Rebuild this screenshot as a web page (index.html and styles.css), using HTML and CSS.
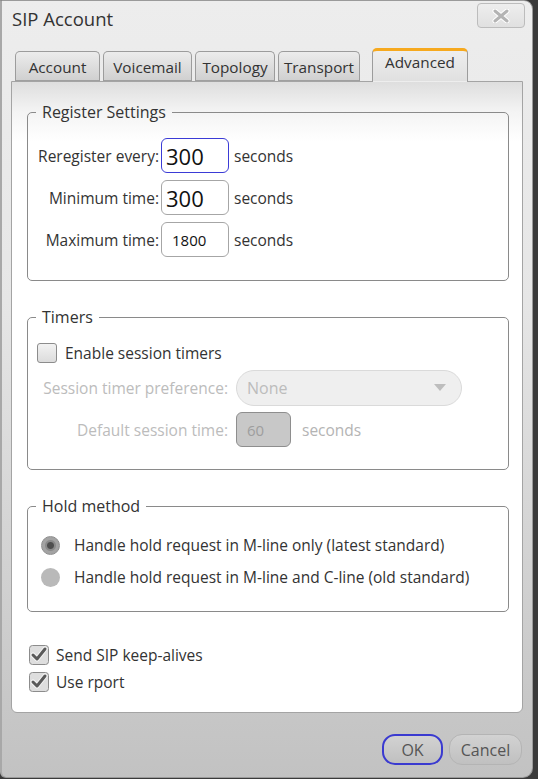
FILE: index.html
```html
<!DOCTYPE html>
<html>
<head>
<meta charset="utf-8">
<link rel="stylesheet" href="styles.css">
</head>
<body>
<div class="window">
  <div class="titlebar">
    <span class="title">SIP Account</span>
    <button class="close" type="button" aria-label="Close">
      <svg width="22" height="14" viewBox="0 0 22 14">
        <path d="M5 2 L17 12 M17 2 L5 12" stroke="#fff" stroke-width="5" stroke-linecap="round"/>
        <path d="M5 2 L17 12 M17 2 L5 12" stroke="#b4b4b4" stroke-width="3" stroke-linecap="round"/>
      </svg>
    </button>
  </div>
  <div class="tabs">
    <div class="tab t1">Account</div>
    <div class="tab t2">Voicemail</div>
    <div class="tab t3">Topology</div>
    <div class="tab t4">Transport</div>
    <div class="tab active">Advanced</div>
    <div class="tabfill"></div>
  </div>
  <div class="panel">
    <fieldset class="group reg">
      <legend>Register Settings</legend>
      <div class="row">
        <span class="lbl">Reregister every:</span>
        <span class="field focus big">300</span>
        <span class="unit">seconds</span>
      </div>
      <div class="row">
        <span class="lbl">Minimum time:</span>
        <span class="field big">300</span>
        <span class="unit">seconds</span>
      </div>
      <div class="row">
        <span class="lbl">Maximum time:</span>
        <span class="field small">1800</span>
        <span class="unit">seconds</span>
      </div>
    </fieldset>

    <fieldset class="group timers">
      <legend>Timers</legend>
      <div class="check-row first">
        <span class="cbox"></span>
        <span>Enable session timers</span>
      </div>
      <div class="row dis">
        <span class="lbl wide">Session timer preference:</span>
        <span class="select">None<svg class="caret" width="12" height="7" viewBox="0 0 12 7"><path d="M0 0 H12 L6 7 Z" fill="#bdbdbd"/></svg></span>
      </div>
      <div class="row dis">
        <span class="lbl wide">Default session time:</span>
        <span class="field disabled">60</span>
        <span class="unit u2">seconds</span>
      </div>
    </fieldset>

    <fieldset class="group hold">
      <legend>Hold method</legend>
      <div class="radio-row">
        <span class="radio on"></span>
        <span>Handle hold request in M-line only (latest standard)</span>
      </div>
      <div class="radio-row">
        <span class="radio"></span>
        <span>Handle hold request in M-line and C-line (old standard)</span>
      </div>
    </fieldset>

    <div class="checks">
      <div class="check-row">
        <svg class="cicon" width="20" height="20" viewBox="0 0 20 20">
          <rect x="0.5" y="0.5" width="19" height="19" rx="3" fill="#dedede" stroke="#8c8c8c"/>
          <path d="M4 10 L8 14 L16 4" fill="none" stroke="#f4f4f4" stroke-width="5" stroke-linejoin="round" stroke-linecap="round"/>
          <path d="M4 10 L8 14 L16 4" fill="none" stroke="#5a5a5a" stroke-width="3" stroke-linejoin="round" stroke-linecap="round"/>
        </svg>
        <span>Send SIP keep-alives</span>
      </div>
      <div class="check-row">
        <svg class="cicon" width="20" height="20" viewBox="0 0 20 20">
          <rect x="0.5" y="0.5" width="19" height="19" rx="3" fill="#dedede" stroke="#8c8c8c"/>
          <path d="M4 10 L8 14 L16 4" fill="none" stroke="#f4f4f4" stroke-width="5" stroke-linejoin="round" stroke-linecap="round"/>
          <path d="M4 10 L8 14 L16 4" fill="none" stroke="#5a5a5a" stroke-width="3" stroke-linejoin="round" stroke-linecap="round"/>
        </svg>
        <span>Use rport</span>
      </div>
    </div>
  </div>
  <div class="footer">
    <button class="btn ok" type="button">OK</button>
    <button class="btn" type="button">Cancel</button>
  </div>
</div>
</body>
</html>
```

FILE: styles.css
```css
html, body {
  margin: 0;
  padding: 0;
}
body {
  background: #3a3a3a;
  width: 538px;
  height: 779px;
  overflow: hidden;
  font-family: "Open Sans", "Noto Sans", sans-serif;
  font-size: 15.5px;
  color: #333;
}
.window {
  box-sizing: border-box;
  width: 533px;
  height: 778px;
  border: 1px solid #9a9a9a;
  border-left: 2px solid #a8a8a8;
  border-radius: 0 9px 10px 6px;
  background: linear-gradient(#ededed 0px, #e6e6e6 300px, #c6c6c6 720px, #c2c2c2 100%);
  display: flex;
  flex-direction: column;
}
.titlebar {
  height: 46px;
  display: flex;
  justify-content: space-between;
  align-items: flex-start;
}
.title {
  margin: 5px 0 0 10px;
  font-size: 18.5px;
  color: #333;
}
.close {
  margin: 2px 7px 0 0;
  width: 48px;
  height: 25px;
  box-sizing: border-box;
  border: 1px solid #bcbcbc;
  border-radius: 4px;
  background: linear-gradient(#eeeeee, #e0e0e0);
  padding: 0;
  display: flex;
  align-items: center;
  justify-content: center;
}
.tabs {
  display: flex;
  align-items: flex-end;
  height: 34px;
  margin-left: 12px;
  position: relative;
  z-index: 1;
}
.tab {
  box-sizing: border-box;
  height: 30px;
  border: 1px solid #9c9c9c;
  border-bottom: 1px solid #a0a0a0;
  border-radius: 5px 5px 0 0;
  background: linear-gradient(#ececec, #d0d0d0);
  display: flex;
  align-items: center;
  justify-content: center;
  font-size: 15.3px;
  color: #333;
  margin-right: 3px;
  padding-top: 1px;
}
.t1 { width: 85px; margin-left: 1px; }
.t2 { width: 89px; }
.t3 { width: 80px; }
.t4 { width: 82px; margin-right: 12px; }
.tab.active {
  width: 96px;
  height: 34px;
  border-top: 3px solid #f6a91f;
  border-bottom: 1px solid transparent;
  background: linear-gradient(#eeeeee, #e0e0e0);
  align-items: flex-start;
  padding-top: 1px;
  margin-right: 0;
  margin-bottom: -1px;
}
.tabfill {
  flex: 1;
}
.panel {
  box-sizing: border-box;
  margin: 0 9px 0 9px;
  height: 632px;
  border: 1px solid #a4a4a4;
  border-radius: 0 0 6px 6px;
  background: linear-gradient(#dedede 0px, #f4f4f4 30px, #ffffff 60px);
  padding: 20px 13px 0 15px;
}
.group {
  margin: 0;
  border: 1px solid #8a8a8a;
  border-radius: 5px;
  padding: 0;
}
.group legend {
  padding: 0 6px;
  margin-left: 8px;
  font-size: 16px;
  line-height: 20px;
}
.reg {
  height: 179px;
  box-sizing: border-box;
  padding-top: 16px;
}
.row {
  display: flex;
  align-items: center;
  height: 35px;
  margin-bottom: 7px;
}
.lbl {
  width: 131px;
  text-align: right;
  margin-right: 2px;
  white-space: nowrap;
}
.lbl.wide {
  width: 200px;
  margin-right: 8px;
}
.field {
  box-sizing: border-box;
  width: 68px;
  height: 35px;
  border: 1px solid #a6a6a6;
  border-radius: 6px;
  background: #fff;
  display: flex;
  align-items: center;
  color: #111;
}
.field.focus { border-color: #3b3bd6; }
.field.big { font-size: 22px; padding-left: 4px; }
.field.small { font-size: 15px; padding-left: 10px; }
.field.disabled {
  width: 55px;
  background: #c8c8c8;
  border-color: #8e8e8e;
  color: #9e9e9e;
  font-size: 15px;
  padding-left: 10px;
}
.unit {
  margin-left: 5px;
}
.unit.u2 { margin-left: 11px; }
.dis { color: #bcbcbc; }
.dis .lbl { color: #bcbcbc; }
.dis .unit { color: #b4b4b4; }
.select {
  box-sizing: border-box;
  width: 226px;
  height: 36px;
  border: 1px solid #dadada;
  border-radius: 18px;
  background: #efefef;
  display: flex;
  align-items: center;
  justify-content: space-between;
  padding: 0 15px 0 10px;
  color: #bcbcbc;
  font-size: 16px;
}
.timers {
  margin-top: 26px;
  height: 163px;
  box-sizing: border-box;
}
.check-row {
  display: flex;
  align-items: center;
}
.check-row.first {
  margin: 16px 0 7px 9px;
  height: 20px;
}
.cbox {
  box-sizing: border-box;
  width: 20px;
  height: 20px;
  border: 1px solid #8c8c8c;
  border-radius: 3px;
  background: linear-gradient(#f2f2f2, #dcdcdc);
  margin-right: 8px;
}
.hold {
  margin-top: 26px;
  height: 116px;
  box-sizing: border-box;
  padding-top: 13px;
}
.radio-row {
  display: flex;
  align-items: center;
  height: 32px;
  margin-left: 13px;
}
.radio {
  box-sizing: border-box;
  width: 19px;
  height: 19px;
  border-radius: 50%;
  background: #b9b9b9;
  margin-right: 14px;
}
.radio.on {
  background: radial-gradient(circle, #4e4e4e 0 3px, #8a8a8a 4px 5px, #a3a3a3 6px);
  border: 1px solid #8e8e8e;
}
.checks {
  margin: 32px 0 0 2px;
  display: flex;
  flex-direction: column;
  gap: 5px;
}
.cicon {
  margin-right: 7px;
  flex: none;
}
.footer {
  display: flex;
  justify-content: flex-end;
  gap: 6px;
  padding: 21px 10px 0 0;
}
.btn {
  box-sizing: border-box;
  height: 31px;
  border: 1px solid #b4b4b4;
  border-radius: 13px;
  background: linear-gradient(#d2d2d2, #c0c0c0);
  font-family: "Open Sans", "Noto Sans", sans-serif;
  font-size: 16px;
  color: #555;
  padding: 0;
  width: 73px;
}
.btn.ok {
  width: 61px;
  border: 2px solid #3a3ad0;
}
```
